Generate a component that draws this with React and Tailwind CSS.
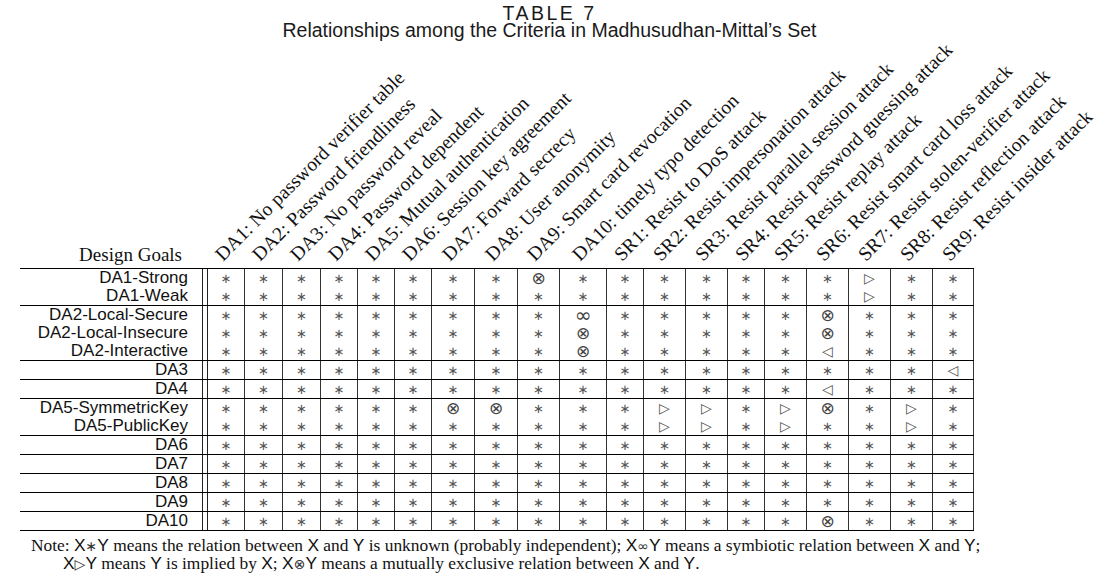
const cols = [
  { w: "w-[37px]", label: "DA1: No password verifier table" },
  { w: "w-[38px]", label: "DA2: Password friendliness" },
  { w: "w-[38px]", label: "DA3: No password reveal" },
  { w: "w-[37px]", label: "DA4: Password dependent" },
  { w: "w-[37px]", label: "DA5: Mutual authentication" },
  { w: "w-[37px]", label: "DA6: Session key agreement" },
  { w: "w-[43px]", label: "DA7: Forward secrecy" },
  { w: "w-[43px]", label: "DA8: User anonymity" },
  { w: "w-[42px]", label: "DA9: Smart card revocation" },
  { w: "w-[47px]", label: "DA10: timely typo detection" },
  { w: "w-[37px]", label: "SR1: Resist to DoS attack" },
  { w: "w-[42px]", label: "SR2: Resist impersonation attack" },
  { w: "w-[42px]", label: "SR3: Resist parallel session attack" },
  { w: "w-[37px]", label: "SR4: Resist password guessing attack" },
  { w: "w-[42px]", label: "SR5: Resist replay attack" },
  { w: "w-[42px]", label: "SR6: Resist smart card loss attack" },
  { w: "w-[42px]", label: "SR7: Resist stolen-verifier attack" },
  { w: "w-[42px]", label: "SR8: Resist reflection attack" },
  { w: "w-[41px]", label: "SR9: Resist insider attack" },
];

// symbols that differ from the default "unknown" star, by column index
const groups = [
  [
    { name: "DA1-Strong", marks: { 8: "x", 16: "r" } },
    { name: "DA1-Weak", marks: { 16: "r" } },
  ],
  [
    { name: "DA2-Local-Secure", marks: { 9: "inf", 15: "x" } },
    { name: "DA2-Local-Insecure", marks: { 9: "x", 15: "x" } },
    { name: "DA2-Interactive", marks: { 9: "x", 15: "l" } },
  ],
  [{ name: "DA3", marks: { 18: "l" } }],
  [{ name: "DA4", marks: { 15: "l" } }],
  [
    { name: "DA5-SymmetricKey", marks: { 6: "x", 7: "x", 11: "r", 12: "r", 14: "r", 15: "x", 17: "r" } },
    { name: "DA5-PublicKey", marks: { 11: "r", 12: "r", 14: "r", 17: "r" } },
  ],
  [{ name: "DA6", marks: {} }],
  [{ name: "DA7", marks: {} }],
  [{ name: "DA8", marks: {} }],
  [{ name: "DA9", marks: {} }],
  [{ name: "DA10", marks: { 15: "x" } }],
];

const serif = "font-['Liberation_Serif','Times_New_Roman',serif]";
const sans = "font-['Liberation_Sans',Arial,sans-serif]";
const sym = "font-['DejaVu_Sans',sans-serif]";

function Mark({ kind }) {
  if (kind === "x") return <span className={`${sym} text-[17px] leading-none text-[#444]`}>⊗</span>;
  if (kind === "inf") return <span className={`${sym} text-[20px] leading-none text-[#444]`}>∞</span>;
  if (kind === "r") return <span className={`${sym} text-[14px] leading-none text-[#555]`}>▷</span>;
  if (kind === "l") return <span className={`${sym} text-[14px] leading-none text-[#555]`}>◁</span>;
  return <span className={`${sym} text-[13px] leading-none text-[#555]`}>∗</span>;
}

function Row({ row }) {
  return (
    <div className="flex h-[18px]">
      <div className={`${sans} w-[182px] pr-[14px] text-right text-[17px] leading-[18px] text-[#111]`}>
        {row.name}
      </div>
      <div className="w-[6px] border-x border-[#222]" />
      {cols.map((c, i) => (
        <div key={i} className={`${c.w} flex items-center justify-center border-r border-[#333]`}>
          <Mark kind={row.marks[i]} />
        </div>
      ))}
    </div>
  );
}

function X() {
  return <span className={sans}>X</span>;
}
function Y() {
  return <span className={sans}>Y</span>;
}
function S({ c }) {
  return <span className={`${sym} text-[14px] text-[#333]`}>{c}</span>;
}

export default function App() {
  return (
    <div className="relative h-[580px] w-[1099px] overflow-hidden bg-white text-[#111]">
      <div className={`${sans} pt-[5px] text-center text-[19.5px] leading-[17px] text-[#1a1a1a]`}>
        <div className="tracking-[2.5px]">TABLE 7</div>
        <div>Relationships among the Criteria in Madhusudhan-Mittal’s Set</div>
      </div>

      <div className="ml-[20px] flex h-[229px]">
        <div className={`${serif} flex w-[182px] items-end justify-end pb-[4px] pr-[20px] text-[19px] leading-[19px]`}>
          Design Goals
        </div>
        <div className="w-[6px]" />
        {cols.map((c) => (
          <div key={c.label} className={`${c.w} relative`}>
            <span
              className={`${serif} absolute bottom-[4px] left-[calc(50%-2px)] origin-bottom-left -rotate-45 whitespace-nowrap text-[19.5px] leading-[19px] tracking-[0.1px]`}
            >
              {c.label}
            </span>
          </div>
        ))}
      </div>

      <div className="ml-[20px] w-[954px] border-t border-black">
        {groups.map((g, gi) => (
          <div key={gi} className="border-b border-black">
            {g.map((row) => (
              <Row key={row.name} row={row} />
            ))}
          </div>
        ))}
      </div>

      <div className={`${serif} mt-[6px] pl-[63px] -indent-[32px] text-[17.4px] leading-[16.5px] text-[#111]`}>
        Note: <X />
        <S c="∗" />
        <Y /> means the relation between <X /> and <Y /> is unknown (probably independent); <X />
        <S c="∞" />
        <Y /> means a symbiotic relation between <X /> and <Y />;
        <br />
        <X />
        <S c="▷" />
        <Y /> means <Y /> is implied by <X />; <X />
        <S c="⊗" />
        <Y /> means a mutually exclusive relation between <X /> and <Y />.
      </div>
    </div>
  );
}
